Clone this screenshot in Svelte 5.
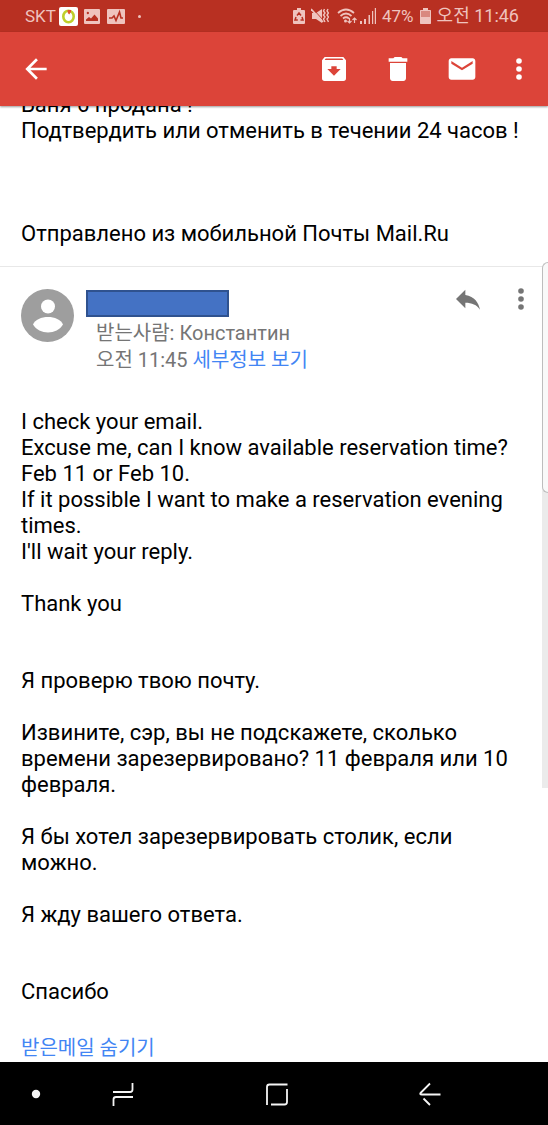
<script lang="ts">
	type Block = { text: string; spaced?: boolean };

	const previous: Block[] = [
		{ text: 'Баня 6 продана !\nПодтвердить или отменить в течении 24 часов !' },
		{ text: 'Отправлено из мобильной Почты Mail.Ru' }
	];

	const reply: Block[] = [
		{
			text: "I check your email.\nExcuse me, can I know available reservation time?\nFeb 11 or Feb 10.\nIf it possible I want to make a reservation evening times.\nI'll wait your reply."
		},
		{ text: 'Thank you' },
		{ text: 'Я проверю твою почту.', spaced: true },
		{
			text: 'Извините, сэр, вы не подскажете, сколько времени зарезервировано? 11 февраля или 10 февраля.'
		},
		{ text: 'Я бы хотел зарезервировать столик, если можно.' },
		{ text: 'Я жду вашего ответа.' },
		{ text: 'Спасибо', spaced: true }
	];
</script>

<div class="screen">
	<div class="status-bar">
		<div class="status-group">
			<span>SKT</span>
			<svg class="app-icon" width="19" height="19" viewBox="0 0 19 19">
				<rect width="19" height="19" rx="2" fill="#fff" />
				<ellipse cx="9.5" cy="9.5" rx="5.2" ry="5.8" fill="none" stroke="#bfcf2b" stroke-width="2.6" />
				<path d="M8.5 3h3.5v2L10.200 7.500 8.800 6z" fill="#e2552e" />
			</svg>
			<svg class="picture-icon" width="16" height="15" viewBox="0 0 16 15">
				<path
					fill="currentColor"
					fill-rule="evenodd"
					d="M1 0h14a1 1 0 0 1 1 1v13a1 1 0 0 1-1 1H1a1 1 0 0 1-1-1V1a1 1 0 0 1 1-1zM2 10.5V12h12V9.500l-3.500-4-3.500 4-2-1.500zM3.800 2.800a1.200 1.200 0 1 0 .1 0z"
				/>
			</svg>
			<svg class="chart-icon" width="18" height="15" viewBox="0 0 18 15">
				<rect width="18" height="15" rx="1" fill="currentColor" />
				<path d="M2 9h3l2-2 2 4.500L12.500 3 14 9h2" fill="none" stroke="#b83022" stroke-width="1.6" />
			</svg>
			<span class="dot"></span>
		</div>
		<div class="status-group">
			<svg width="12" height="16" viewBox="0 0 12 16">
				<path
					fill="currentColor"
					d="M4 0h4v2h3a1 1 0 0 1 1 1v12a1 1 0 0 1-1 1H1a1 1 0 0 1-1-1V3a1 1 0 0 1 1-1h3z"
				/>
				<path
					d="M4 7.500 6 5l2 2.500M9 9l1 3H7.500M4.800 12H2l1-3"
					fill="none"
					stroke="#b83022"
					stroke-width="1.5"
				/>
			</svg>
			<svg class="mute-icon" width="18" height="16" viewBox="0 0 18 16">
				<path fill="currentColor" d="M1 5h4l6-4v14l-6-4H1z" />
				<path d="M1 0 13 13" stroke="#b83022" stroke-width="1" />
				<path d="m0 1 12 13" stroke="currentColor" stroke-width="1.8" />
				<path
					d="m13.500 1-1 2 1.500 2-1.500 2 1.500 2-1.500 2 1.500 3M17 1l-1 2 1.500 2L16 7l1.500 2-1.500 2 1.500 3"
					fill="none"
					stroke="currentColor"
					stroke-width="1.4"
				/>
			</svg>
			<svg class="wifi-icon" width="20" height="16" viewBox="0 0 20 16">
				<g fill="none" stroke="currentColor" stroke-width="1.7">
					<path d="M1 5Q9 -2 17 5M3.500 8Q9 3 14.500 8M6 10.500Q9 8 12 10.500" />
					<path stroke-width="1.2" d="M12.500 10v5m-2-2 2 2 2-2M17.500 15v-5m-2 2 2-2 2 2" />
				</g>
				<circle cx="8.500" cy="13" r="1.500" fill="currentColor" />
			</svg>
			<svg class="signal-icon" width="16" height="16" viewBox="0 0 16 16" fill="currentColor">
				<path d="M0 13h2v3H0zM4 11h2v5H4zM8.500 7h1.500v9H8.500zM12 3h1.200v13H12zM14.800 0H16v16h-1.200z" />
			</svg>
			<span>47%</span>
			<svg class="battery-icon" width="11" height="16" viewBox="0 0 11 16">
				<path
					fill="currentColor"
					opacity="0.6"
					d="M3 0h5v2h2a1 1 0 0 1 1 1v12a1 1 0 0 1-1 1H1a1 1 0 0 1-1-1V3a1 1 0 0 1 1-1h2z"
				/>
				<path d="M0 9h11v6a1 1 0 0 1-1 1H1a1 1 0 0 1-1-1zM3 0h5v2H3z" fill="currentColor" />
				<path d="M.5 9V2.500h10V9" fill="none" stroke="currentColor" />
			</svg>
			<span class="clock">오전 11:46</span>
		</div>
	</div>

	<header class="toolbar">
		<button class="icon-button" aria-label="뒤로">
			<svg width="32" height="32" viewBox="0 0 24 24">
				<path fill="currentColor" d="M20 11H7.830l5.590-5.590L12 4l-8 8 8 8 1.410-1.410L7.830 13H20v-2z" />
			</svg>
		</button>
		<div class="actions">
			<button class="icon-button" aria-label="보관">
				<svg width="32" height="32" viewBox="0 0 24 24">
					<path
						fill="currentColor"
						fill-rule="evenodd"
						d="M5 3h14l2 2.500V19a2 2 0 0 1-2 2H5a2 2 0 0 1-2-2V5.500zM5.800 4.200 5 5.200h14l-.8-1zM12 17l5-5H14v-2h-4v2H7z"
					/>
				</svg>
			</button>
			<button class="icon-button" aria-label="삭제">
				<svg width="32" height="32" viewBox="0 0 24 24">
					<path
						fill="currentColor"
						d="M6 19c0 1.100.9 2 2 2h8c1.100 0 2-.9 2-2V7.500H6zM19 4h-3.500l-1-1h-5l-1 1H5v2.500h14z"
					/>
				</svg>
			</button>
			<button class="icon-button" aria-label="읽지않음으로 표시">
				<svg width="32" height="32" viewBox="0 0 24 24">
					<path
						fill="currentColor"
						d="M20 4H4c-1.100 0-1.990.9-1.990 2L2 18c0 1.100.9 2 2 2h16c1.100 0 2-.9 2-2V6c0-1.100-.9-2-2-2zm0 4-8 5-8-5V6l8 5 8-5v2z"
					/>
				</svg>
			</button>
			<button class="icon-button more" aria-label="옵션 더보기">
				<svg width="32" height="32" viewBox="0 0 24 24" fill="currentColor">
					<circle cx="12" cy="6" r="2.100" />
					<circle cx="12" cy="12" r="2.100" />
					<circle cx="12" cy="18" r="2.100" />
				</svg>
			</button>
		</div>
	</header>

	<main>
		<section class="message previous">
			{#each previous as block}
				<p>{block.text}</p>
			{/each}
		</section>

		<article>
			<div class="sender">
				<svg class="avatar" width="53" height="53" viewBox="0 0 53 53">
					<circle cx="26.500" cy="26.500" r="26.500" fill="#9e9e9e" />
					<circle cx="27" cy="17.500" r="7" fill="#fff" />
					<path d="M12 35.500C16 25.500 38 25.500 42 35.500 36 46 18 46 12 35.500z" fill="#fff" />
				</svg>
				<div class="details">
					<div class="name"></div>
					<div class="meta">받는사람: Константин</div>
					<div class="meta">오전 11:45 <a href="#details">세부정보 보기</a></div>
				</div>
				<div class="sender-actions">
					<button class="icon-button" aria-label="답장">
						<svg width="32" height="32" viewBox="0 0 24 24">
							<path fill="currentColor" d="M10 9V5l-7 7 7 7v-4.100c5 0 8.500 1.600 11 5.100-1-5-4-10-11-11z" />
						</svg>
					</button>
					<button class="icon-button" aria-label="메일 옵션">
						<svg width="32" height="32" viewBox="0 0 24 24" fill="currentColor">
							<circle cx="12" cy="6" r="2.100" />
							<circle cx="12" cy="12" r="2.100" />
							<circle cx="12" cy="18" r="2.100" />
						</svg>
					</button>
				</div>
			</div>

			<div class="message">
				{#each reply as block}
					<p class:spaced={block.spaced}>{block.text}</p>
				{/each}
			</div>
			<a class="toggle-quote" href="#quote">받은메일 숨기기</a>
		</article>
	</main>

	<div class="scroll-track"></div>
	<div class="edge-handle"></div>

	<nav>
		<button class="icon-button" aria-label="탐색 메뉴 고정">
			<svg width="32" height="32" viewBox="0 0 32 32">
				<circle cx="16" cy="16" r="4.200" fill="currentColor" />
			</svg>
		</button>
		<div class="nav-keys">
			<button class="icon-button" aria-label="최근 앱">
				<svg width="32" height="32" viewBox="0 0 32 32">
					<path
						d="M6 14h17q2.500 0 2.500-2.500V5M26 19H9q-2.500 0-2.500 2.500V28"
						fill="none"
						stroke="currentColor"
						stroke-width="1.800"
					/>
				</svg>
			</button>
			<button class="icon-button" aria-label="홈">
				<svg width="32" height="32" viewBox="0 0 32 32">
					<path
						d="M6 27V9q0-2.500 2.500-2.500H26.500M26 11v13q0 2.500-2.500 2.500H10"
						fill="none"
						stroke="currentColor"
						stroke-width="1.800"
					/>
				</svg>
			</button>
			<button class="icon-button" aria-label="이전">
				<svg width="32" height="32" viewBox="0 0 32 32">
					<path
						d="M16 5.500 7 14.500q-2 2 1 2h18.500M9.500 20.500l6.500 6.500"
						fill="none"
						stroke="currentColor"
						stroke-width="1.800"
					/>
				</svg>
			</button>
		</div>
	</nav>
</div>

<style>
	:global(body) {
		background: #fff;
	}

	.screen {
		position: relative;
		display: flex;
		flex-direction: column;
		min-height: 100vh;
		overflow: hidden;
		font-family: Roboto, 'Noto Sans CJK KR', sans-serif;
		color: #000;
	}

	.status-bar {
		display: flex;
		justify-content: space-between;
		align-items: center;
		height: 32px;
		padding: 0 29px 0 25px;
		background: #b83022;
		color: #efc3be;
		font-size: 17px;
		line-height: 32px;
		white-space: nowrap;
	}

	.status-group {
		display: flex;
		align-items: center;
	}

	.app-icon {
		margin-left: 3px;
	}

	.picture-icon {
		margin-left: 6px;
	}

	.chart-icon {
		margin-left: 7px;
	}

	.dot {
		width: 3px;
		height: 3px;
		margin-left: 13px;
		border-radius: 50%;
		background: currentColor;
	}

	.mute-icon {
		margin-left: 6px;
	}

	.wifi-icon {
		margin-left: 8px;
	}

	.battery-icon {
		margin-left: 6px;
	}

	.signal-icon {
		margin: 0 6px 0 3px;
	}

	.clock {
		margin-left: 6px;
		font-size: 18px;
	}

	.toolbar {
		position: relative;
		display: flex;
		justify-content: space-between;
		align-items: center;
		height: 74px;
		padding: 0 13px 0 20px;
		background: #dc4439;
		box-shadow: 0 1px 2px rgba(0, 0, 0, 0.4);
		color: #fff;
	}

	.actions {
		display: flex;
		gap: 32px;
	}

	.more {
		margin-left: -7px;
	}

	.icon-button {
		display: block;
		padding: 0;
		border: none;
		background: none;
		color: inherit;
		cursor: pointer;
	}

	.icon-button svg {
		display: block;
	}

	main {
		flex: 1;
	}

	.message {
		padding: 0 21px;
		font-size: 22px;
		line-height: 26px;
	}

	/* scrolled partly under the toolbar */
	.previous {
		margin-top: -14px;
		padding-bottom: 19px;
		border-bottom: 1px solid #e8e8e8;
	}

	p {
		margin: 0;
		white-space: pre-line;
	}

	p + p {
		margin-top: 26px;
	}

	.previous p + p {
		margin-top: 77px;
	}

	p.spaced {
		margin-top: 51px;
	}

	.sender {
		display: flex;
		align-items: flex-start;
		padding: 22px 11px 35px 21px;
	}

	.avatar {
		flex-shrink: 0;
	}

	.details {
		flex: 1;
		padding-top: 1px;
		margin-left: 12px;
	}

	.name {
		box-sizing: border-box;
		width: 143px;
		height: 27px;
		margin-bottom: 3px;
		border: 2px solid #2f528f;
		background: #4472c4;
	}

	.meta {
		padding-left: 10px;
		color: #757575;
		font-size: 20px;
		line-height: 27px;
	}

	.sender-actions {
		display: flex;
		gap: 21px;
		margin-top: -6px;
		color: #757575;
	}

	a {
		color: #4285f4;
		text-decoration: none;
	}

	.toggle-quote {
		display: block;
		padding: 29px 21px 0;
		font-size: 20px;
		line-height: 28px;
	}

	.scroll-track {
		position: absolute;
		top: 295px;
		right: 0;
		width: 6px;
		height: 493px;
		background: #ebebeb;
	}

	.edge-handle {
		position: absolute;
		top: 262px;
		right: 0;
		box-sizing: border-box;
		width: 6px;
		height: 231px;
		border: 1px solid #bdbdbd;
		border-right: none;
		border-radius: 6px 0 0 6px;
		background: #f9f9f9;
	}

	nav {
		display: flex;
		align-items: center;
		gap: 55px;
		height: 64px;
		padding: 0 102px 0 20px;
		background: #000;
		color: #f5f5f5;
	}

	.nav-keys {
		display: flex;
		flex: 1;
		justify-content: space-between;
	}
</style>
